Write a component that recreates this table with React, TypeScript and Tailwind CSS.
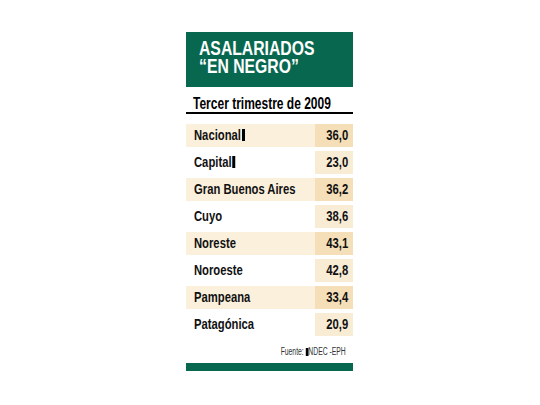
import React from 'react';

const rows: { name: string; value: string; bar?: boolean }[] = [
  { name: 'Nacional', value: '36,0', bar: true },
  { name: 'Capital', value: '23,0', bar: true },
  { name: 'Gran Buenos Aires', value: '36,2' },
  { name: 'Cuyo', value: '38,6' },
  { name: 'Noreste', value: '43,1' },
  { name: 'Noroeste', value: '42,8' },
  { name: 'Pampeana', value: '33,4' },
  { name: 'Patagónica', value: '20,9' },
];

// no condensed face installed: squeeze Arial-width text horizontally
function Narrow({ children, right }: { children: React.ReactNode; right?: boolean }) {
  return (
    <span className={`inline-block whitespace-nowrap scale-x-75 ${right ? 'origin-right' : 'origin-left'}`}>
      {children}
    </span>
  );
}

export default function App() {
  return (
    <div className="w-[540px] h-[405px] bg-white pt-[32px] pl-[186px] font-['Liberation_Sans',Arial,sans-serif]">
      <div className="w-[167px]">
        <div className="h-[55px] bg-[#08684f] pl-[13px] pt-[7px] text-white font-bold text-[21px] leading-[18px]">
          <div><Narrow>ASALARIADOS</Narrow></div>
          <div><Narrow>“EN NEGRO”</Narrow></div>
        </div>
        <div className="h-[25px] pl-[7px] pt-[9px] text-[16px] leading-[16px] font-bold text-black">
          <Narrow>Tercer trimestre de 2009</Narrow>
        </div>
        <div className="h-[2px] bg-black" />
        <div className="mt-[10px] flex flex-col gap-[4px]">
          {rows.map((r, i) => {
            const striped = i % 2 === 0;
            return (
              <div key={r.name} className={`flex h-[23px] ${striped ? 'bg-[#fbf0dc]' : 'bg-white'}`}>
                <div className="flex-1 min-w-0 overflow-visible flex items-center pl-[8px] text-[15px] font-bold text-[#111]">
                  <Narrow>
                    {r.name}
                    {r.bar && <span className="inline-block w-[4px] h-[12px] bg-black ml-[1px] align-[-1px]" />}
                  </Narrow>
                </div>
                <div className={`w-[38px] shrink-0 ml-[2px] flex items-center justify-end pr-[5px] text-[15px] font-bold text-[#111] ${striped ? 'bg-[#f4dfb8]' : 'bg-[#f8ecd5]'}`}>
                  <Narrow right>{r.value}</Narrow>
                </div>
              </div>
            );
          })}
        </div>
        <div className="h-[27px] flex items-center justify-end pr-[7px] pt-[4px] text-[10px] text-[#333]">
          <span className="inline-block whitespace-nowrap scale-x-[0.68] origin-right">
            Fuente: <span className="inline-block w-[4px] h-[8px] bg-black align-[-1px]" />NDEC -EPH
          </span>
        </div>
        <div className="h-[8px] bg-[#08684f]" />
      </div>
    </div>
  );
}
